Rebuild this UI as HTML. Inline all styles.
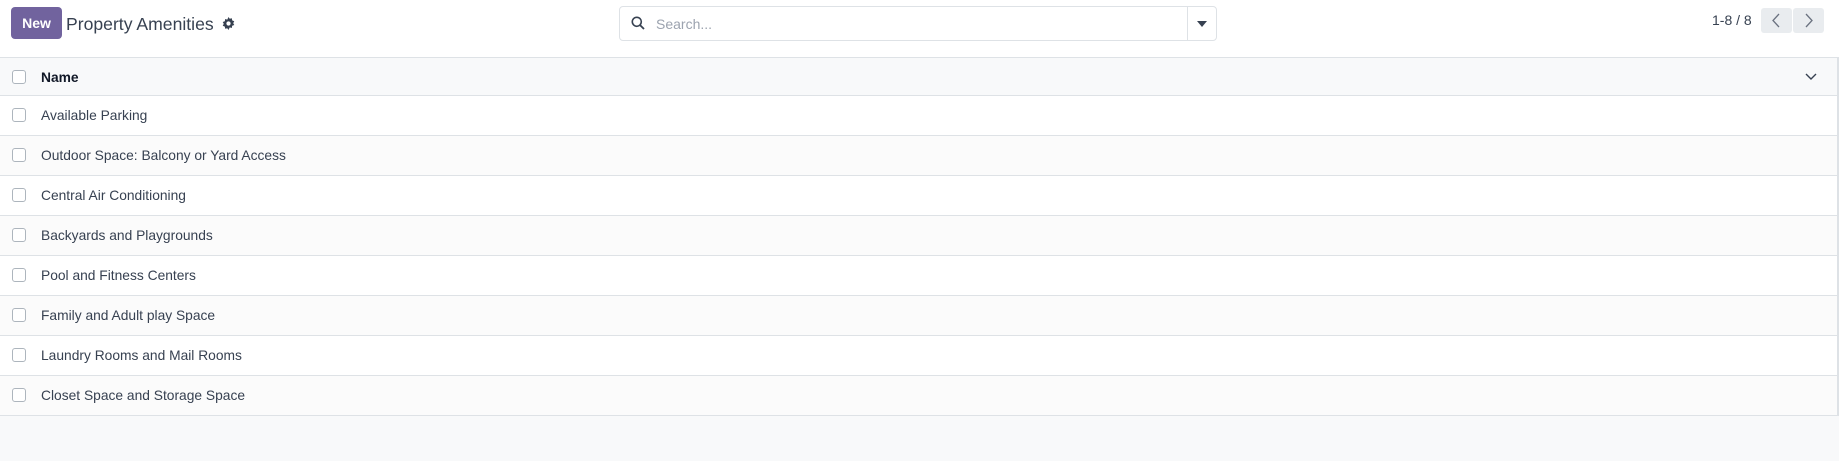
<!DOCTYPE html>
<html><head><style>
body{margin:0;width:1839px;height:461px;background:#f8f9fa;font-family:"Liberation Sans",sans-serif;color:#374151;overflow:hidden;position:relative}
.top{position:absolute;left:0;top:0;width:1839px;height:57px;background:#fff}
.new{position:absolute;left:11px;top:7px;width:51px;height:32px;background:#71639e;color:#fff;border-radius:4px;font-size:14px;font-weight:bold;line-height:32px;text-align:center}
.title{position:absolute;left:66px;top:14px;font-size:17.6px;color:#374151}
.gear{position:absolute;left:222px;top:17px}
.search{position:absolute;left:619px;top:6px;width:596px;height:33px;border:1px solid #dee2e6;border-radius:4px;background:#fff}
.search .ph{position:absolute;left:36px;top:9px;font-size:14px;color:#9ca3af}
.search .sep{position:absolute;left:567px;top:0;width:1px;height:33px;background:#dee2e6}
.pager{position:absolute;left:1712px;top:12px;font-size:14px;color:#374151}
.pbtn{position:absolute;top:8px;width:31px;height:25px;background:#e9ecef;border-radius:3px}
.table{position:absolute;left:0;top:57px;width:1837px;border-right:2px solid #dee2e6}
.hdr{height:37px;background:#f8f9fa;border-top:1px solid #dee2e6;position:relative}
.row{height:39px;border-top:1px solid #dee2e6;position:relative;background:#fff}
.row.alt{background:#fbfbfb}
.cb{position:absolute;left:12px;width:12px;height:12px;border:1px solid #adb5bd;border-radius:3px;background:#fff}
.hdr .cb{top:12px}.row .cb{top:12px}
.txt{position:absolute;left:41px;top:12px;font-size:13.8px}
.hdr .txt{font-weight:bold;color:#111827;top:12px}
.last{border-bottom:1px solid #dee2e6}
</style></head><body>
<div class="top">
<div class="new">New</div>
<div class="title">Property Amenities</div>
<svg class="gear" width="13" height="13" viewBox="0 0 16 16"><path fill="#374151" d="M8 0l1.5 2.2 2.6-.7.4 2.7 2.6 1-1.3 2.3 1.3 2.3-2.6 1-.4 2.7-2.6-.7L8 16l-1.5-2.2-2.6.7-.4-2.7-2.6-1L2.2 8.5.9 6.2l2.6-1 .4-2.7 2.6.7z"/><circle cx="8" cy="8" r="2.6" fill="#fff"/></svg>
<div class="search">
<svg style="position:absolute;left:11px;top:9px" width="14" height="14" viewBox="0 0 14 14"><circle cx="5.8" cy="5.8" r="4.5" fill="none" stroke="#374151" stroke-width="1.6"/><path d="M9.2 9.2L13 13" stroke="#374151" stroke-width="1.8"/></svg>
<div class="ph">Search...</div>
<div class="sep"></div>
<svg style="position:absolute;left:577px;top:14px" width="10" height="6"><path d="M0 0h10L5 6z" fill="#374151"/></svg>
</div>
<div class="pager">1-8 / 8</div>
<div class="pbtn" style="left:1761px"><svg width="31" height="25"><path d="M18 6l-6 6.5 6 6.5" fill="none" stroke="#6b7280" stroke-width="1.3"/></svg></div>
<div class="pbtn" style="left:1793px"><svg width="31" height="25"><path d="M13 6l6 6.5-6 6.5" fill="none" stroke="#6b7280" stroke-width="1.3"/></svg></div>
</div>
<div class="table">
<div class="hdr"><div class="cb"></div><div class="txt">Name</div>
<svg style="position:absolute;left:1805px;top:15px" width="12" height="8"><path d="M1 1l5 5 5-5" fill="none" stroke="#374151" stroke-width="1.4"/></svg></div>
<div class="row"><div class="cb"></div><div class="txt">Available Parking</div></div>
<div class="row alt"><div class="cb"></div><div class="txt">Outdoor Space: Balcony or Yard Access</div></div>
<div class="row"><div class="cb"></div><div class="txt">Central Air Conditioning</div></div>
<div class="row alt"><div class="cb"></div><div class="txt">Backyards and Playgrounds</div></div>
<div class="row"><div class="cb"></div><div class="txt">Pool and Fitness Centers</div></div>
<div class="row alt"><div class="cb"></div><div class="txt">Family and Adult play Space</div></div>
<div class="row"><div class="cb"></div><div class="txt">Laundry Rooms and Mail Rooms</div></div>
<div class="row alt last"><div class="cb"></div><div class="txt">Closet Space and Storage Space</div></div>
</div>
</body></html>
